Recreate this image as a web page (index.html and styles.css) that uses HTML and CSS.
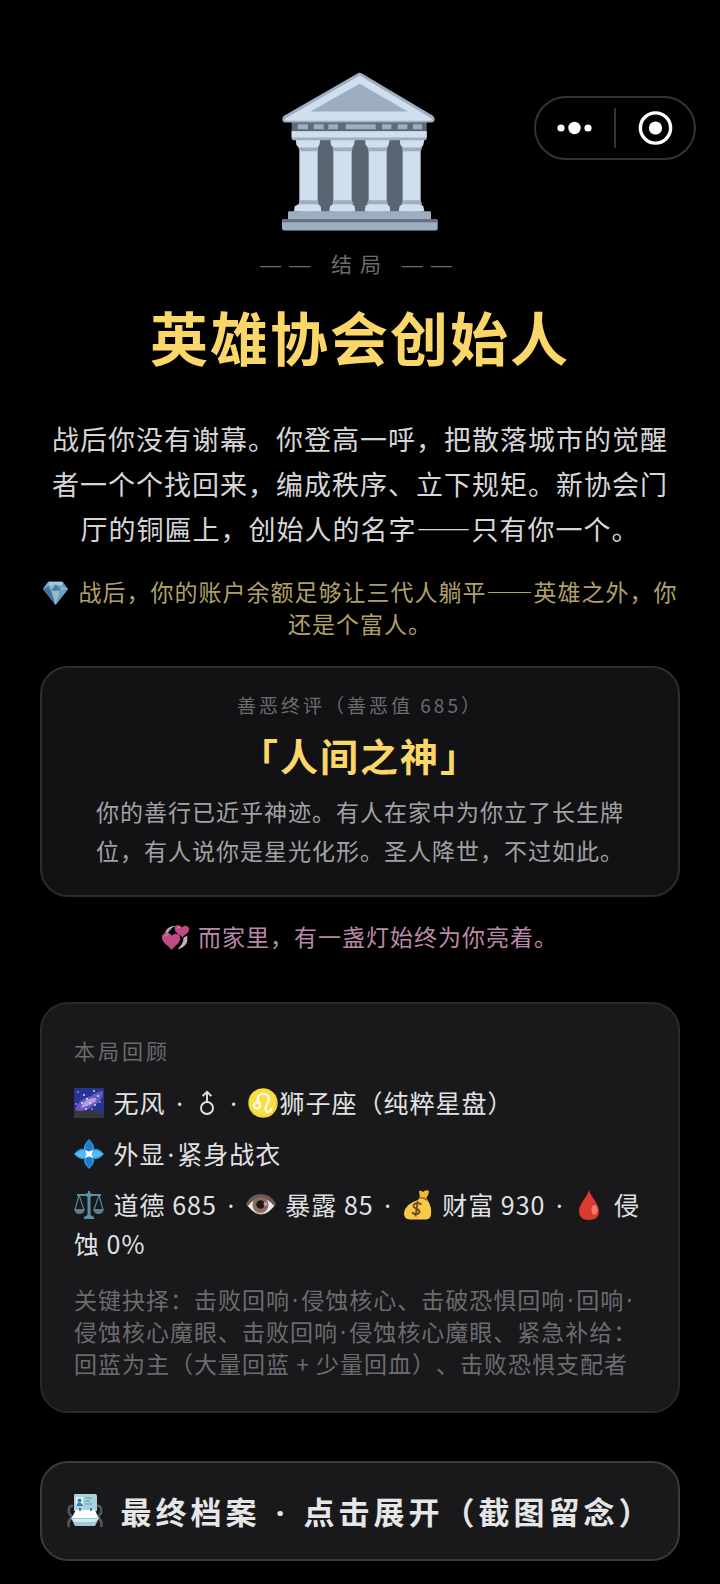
FILE: index.html
```html
<!DOCTYPE html>
<html lang="zh-CN">
<head>
<meta charset="utf-8">
<meta name="viewport" content="width=device-width, initial-scale=1">
<title>英雄协会创始人</title>
<link rel="stylesheet" href="styles.css">
</head>
<body>
<nav class="capsule" aria-label="小程序">
  <button class="capsule-btn" type="button" aria-label="更多">
    <svg width="36" height="36" viewBox="0 0 36 36" fill="#fff"><circle cx="4" cy="18" r="3.6"/><circle cx="17.500" cy="18" r="6.2"/><circle cx="31" cy="18" r="3.6"/></svg>
  </button>
  <span class="capsule-line"></span>
  <button class="capsule-btn" type="button" aria-label="关闭">
    <svg width="36" height="36" viewBox="0 0 36 36"><circle cx="18.500" cy="18" r="15.1" fill="none" stroke="#fff" stroke-width="3.4"/><circle cx="18.500" cy="18" r="6.6" fill="#fff"/></svg>
  </button>
</nav>
<main class="page">
  <svg class="hero" viewBox="66 36 468 476" aria-hidden="true">
    <path d="M120 238H480V460H120Z" fill="#596570"/>
    <path d="M118 238H173V455H118ZM220 238H275V455H220ZM326 238H380V455H326ZM428 238H482V455H428Z" fill="#d0dfed"/>
    <g fill="#d0dfed">
      <path d="M107 238H181L178 254L171 265H118L109 254Z"/><path d="M211 238H285L282 254L275 265H222L213 254Z"/><path d="M315 238H389L386 254L379 265H326L317 254Z"/><path d="M419 238H493L490 254L483 265H430L421 254Z"/>
      <path d="M120 430H172L182 438L184 454H102L104 438Z"/><path d="M222 430H274L284 438L286 454H208L210 438Z"/><path d="M326 430H378L389 438L391 454H314L316 438Z"/><path d="M430 430H480L490 438L493 454H416L419 438Z"/>
    </g>
    <path d="M114 262H175L171 273H122ZM218 262H279L275 273H222ZM322 262H383L379 273H326ZM426 262H486L482 273H430ZM122 420H171L177 432H115ZM222 420H275L281 432H216ZM326 420H379L385 432H320ZM430 420H481L487 432H424Z" fill="#9caec0"/>
    <path d="M95 184H500V218H95Z" fill="#606b76"/>
    <path d="M113 192H144V207H113ZM161 192H191V207H161ZM205 192H234V207H205ZM257 192H347V207H257ZM366 192H394V207H366ZM413 192H442V207H413ZM459 192H486V207H459Z" fill="#9caec0"/>
    <path d="M95 213H500V234Q500 240 494 240H101Q95 240 95 234Z" fill="#9caec0"/><path d="M95 213H500V232H95Z" fill="#d0dfed"/>
    <path d="M291 41Q299 35 307 41L519 167Q525 173 524 180Q522 187 514 187H76Q68 187 67 180Q66 172 72 167Z" fill="#9caec0"/>
    <path d="M299 46L514 174Q520 181 511 182H80Q71 181 77 174Z" fill="#d0dfed"/>
    <path d="M299 71L443 154H151Z" fill="#9caec0"/>
    <path d="M88 453H509Q513 453 513 457V478H84V457Q84 453 88 453Z" fill="#9caec0"/>
    <path d="M70 477H529Q533 477 533 481V505Q533 511 527 511H72Q66 511 66 505V481Q66 477 70 477Z" fill="#9caec0"/>
    <path d="M69 477H530L533 486H66Z" fill="#64717e"/>
  </svg>
  <p class="eyebrow"><span class="dash">——</span> 结局 <span class="dash">——</span></p>
  <h1 class="title">英雄协会创始人</h1>
  <p class="story">战后你没有谢幕。你登高一呼，把散落城市的觉醒者一个个找回来，编成秩序、立下规矩。新协会门厅的铜匾上，创始人的名字——只有你一个。</p>
  <p class="note gold"><svg class="emoji" viewBox="0 0 30 30" aria-hidden="true"><path d="M7 3H23L29 11L15 29L1 11Z" fill="#5e94bd"/><path d="M7 3H23L22 8L15 6L8 8Z" fill="#a9c9d9"/><path d="M7 3L8 8L1 11Z" fill="#76adcf"/><path d="M8 8L10 13L1 11ZM15 6L20 13L10 13Z" fill="#4778aa"/><path d="M8 8L15 6L10 13ZM22 8L20 13L29 11Z" fill="#88b8d3"/><path d="M10 13H20L15 29Z" fill="#9bb8c9"/><path d="M20 13L29 11L15 29Z" fill="#6c9fc2"/><path d="M1 11L10 13L15 29Z" fill="#3d6fa2"/></svg> 战后，你的账户余额足够让三代人躺平——英雄之外，你还是个富人。</p>

  <section class="card verdict">
    <p class="verdict-label">善恶终评（善恶值 685）</p>
    <h2 class="verdict-name">「人间之神」</h2>
    <p class="verdict-text">你的善行已近乎神迹。有人在家中为你立了长生牌位，有人说你是星光化形。圣人降世，不过如此。</p>
  </section>

  <p class="note pink"><svg class="emoji" viewBox="0 0 30 30" aria-hidden="true"><path d="M3 12Q4 2 16 2Q8 5 6 12Z" fill="#b5a3ad"/><path d="M28 13Q30 25 17 28Q24 22 24 15Z" fill="#c6acba"/><path d="M11 29C7 24 0 21 0 15C0 9 8 8 11 13C15 8 22 12 20 18C18 23 13 25 11 29Z" fill="#be4c82"/><path d="M23 15C20 12 14 10 14 5C14 0 20 0 22 4C25 0 31 2 30 7C29 11 24 12 23 15Z" fill="#be4c82"/><path d="M3 14Q4 11 7 12M17 5Q18 3 20 4" fill="none" stroke="#d384a6" stroke-width="1.4"/></svg> 而家里，有一盏灯始终为你亮着。</p>

  <section class="card review">
    <h2 class="review-label">本局回顾</h2>
    <div class="rows">
      <p class="row"><svg class="emoji" viewBox="0 0 30 30" aria-hidden="true"><path d="M0 0H30V30H0Z" fill="#28348f"/><path d="M0 22Q14 20 30 25V30H0Z" fill="#34383d"/><path d="M1 22Q5 10 17 8Q25 3 29 3Q29 13 19 18Q10 25 1 22Z" fill="#6a5ac0"/><path d="M7 20Q9 12 18 10Q25 9 21 14Q15 18 7 20Z" fill="#b69be0"/><g fill="#c3e6ff"><circle cx="4" cy="4" r=".8"/><circle cx="10" cy="7" r="1"/><circle cx="20" cy="3" r="1"/><circle cx="13" cy="11" r="1"/><circle cx="24" cy="8" r="1"/><circle cx="8" cy="15" r="1"/><circle cx="16" cy="15" r="1"/><circle cx="21" cy="17" r="1"/><circle cx="12" cy="21" r="1"/><circle cx="26" cy="14" r=".8"/><circle cx="2" cy="16" r=".8"/><circle cx="18" cy="21" r=".8"/></g></svg> 无风 <span class="dot sep">·</span> <svg class="male" viewBox="0 0 24 26" role="img" aria-label="男" fill="none" stroke="#e2e2e4" stroke-width="1.9"><circle cx="12" cy="18" r="6"/><path d="M12 12V1.8M7.6 6.2L12 1.8L16.4 6.2"/></svg> <span class="dot sep">·</span> <svg class="emoji flush" viewBox="0 0 30 30" role="img" aria-label="狮子"><circle cx="15" cy="15" r="14.7" fill="#f2d735"/><circle cx="14.5" cy="14" r="13" fill="#f8df45"/><g fill="none" stroke="#fffbed" stroke-width="2.2" stroke-linecap="round"><circle cx="9" cy="17.5" r="3.1"/><path d="M11.5 15.5C8 11 10 6 15 6C21 6 22 11 19.5 15C17 19 17 24 20 24Q22.5 24 23.5 21"/></g></svg>狮子座（纯粹星盘）</p>
      <p class="row"><svg class="emoji" viewBox="0 0 30 30" aria-hidden="true"><path d="M15 0Q21 6 20 10Q25 9 30 15Q25 21 20 20Q21 24 15 30Q9 24 10 20Q5 21 0 15Q5 9 10 10Q9 6 15 0Z" fill="#2b9be8"/><path d="M15 1Q20 7 18 11L15 14L12 11Q10 7 15 1ZM15 29Q20 23 18 19L15 16L12 19Q10 23 15 29Z" fill="#2279cf"/><path d="M1 15Q7 10 11 12L14 15L11 18Q7 20 1 15ZM29 15Q23 10 19 12L16 15L19 18Q23 20 29 15Z" fill="#58baf4"/><path d="M11 11L15 12.5L19 11L17.5 15L19 19L15 17.5L11 19L12.5 15Z" fill="#fff"/></svg> 外显<span class="dot">·</span>紧身战衣</p>
      <p class="row"><svg class="emoji" viewBox="0 0 30 30" aria-hidden="true"><g fill="none" stroke="#5f8798" stroke-width="1.1"><path d="M5 5L1 20M5 5L10 20M25 5L20 20M25 5L29 20"/></g><path d="M3 4H11L14 3V1H16V3L19 4H27V6H18L16.5 7V25L20 27V29H10V27L13.5 25V7L12 6H3Z" fill="#5c8fa6"/><path d="M0 19H11Q10 24 5.500 24Q1 24 0 19ZM19 19H30Q29 24 24.500 24Q20 24 19 19Z" fill="#587f90"/></svg> 道德 685 <span class="dot sep">·</span> <svg class="emoji" viewBox="0 0 30 30" aria-hidden="true"><path d="M1 15Q15 -2 29 15Q15 33 1 15Z" fill="#eceaea"/><path d="M0 14Q5 4 15 4Q25 4 30 14L28 16Q23 9 15 8Q7 9 2 16Z" fill="#6b5a53"/><circle cx="14.500" cy="15" r="8" fill="#8d6b5b"/><circle cx="14.500" cy="14.500" r="4.200" fill="#1c1818"/><circle cx="19.500" cy="14" r="2" fill="#c2a496"/><path d="M2 16Q15 32 28 16" fill="none" stroke="#c9bdb8"/></svg> 暴露 85 <span class="dot sep">·</span> <svg class="emoji" viewBox="0 0 30 30" aria-hidden="true"><path d="M16 1Q18 0 20 2Q23 -1 26 1Q26 5 23 8L17 8Z" fill="#f5b92d"/><path d="M15 10L17 7H23L25 11Q29 17 28 25Q27 29.500 22 29.500H8Q1 30 1 23Q2 14 15 10Z" fill="#fcc944"/><path d="M16 8Q20 7 24 10" fill="none" stroke="#9c5f24" stroke-width="1.600"/><path d="M18.500 14.500Q14 11.500 11 14.500C8 19 18 18 16.500 22.500Q13 26 9 22.500M14.800 11L12.500 26.500" fill="none" stroke="#6b4924" stroke-width="1.800"/></svg> 财富 930 <span class="dot sep">·</span> <svg class="emoji" viewBox="0 0 30 30" aria-hidden="true"><path d="M15 0C17 7 25 14 25 21Q25 30 15 30Q5 30 5 21C5 14 13 7 15 0Z" fill="#d93b30"/><ellipse cx="20.500" cy="20" rx="3" ry="5" fill="#f47b67"/></svg> 侵蚀 0%</p>
    </div>
    <p class="choices">关键抉择：击败回响<span class="dot">·</span>侵蚀核心、击破恐惧回响<span class="dot">·</span>回响<span class="dot">·</span>侵蚀核心魔眼、击败回响<span class="dot">·</span>侵蚀核心魔眼、紧急补给：回蓝为主（大量回蓝 + 少量回血）、击败恐惧支配者</p>
  </section>

  <button class="card archive" type="button"><svg class="emoji" viewBox="0 0 36 36" aria-hidden="true"><path d="M6 13Q1 12 2 20L5 24Q0 29 2 34M30 13Q35 12 34 20L31 24Q36 29 34 34" fill="none" stroke="#55565c" stroke-width="2.600"/><path d="M7 2Q7 1 8 1H28Q30 1 30 3V18H7Z" fill="#a9d3db"/><path d="M9 4H16V13H9Z" fill="#e2f4fa"/><circle cx="12.500" cy="7.500" r="2" fill="#3478c3"/><path d="M9.500 13Q10 9 12.500 9.500Q15.500 10 16 13Z" fill="#3478c3"/><path d="M18 5H25M18 8H23M18 11H25" stroke="#6b99a4" stroke-width="1.100"/><path d="M9 17H28L32 26H4Z" fill="#fff"/><path d="M4 25H32L28 33H8Z" fill="#9acbd6"/><path d="M5 26H31L28 29H8Z" fill="#d1edf1"/><path d="M13 15V18M24 15V18" stroke="#4c5055" stroke-width="1.500"/></svg> 最终档案 <span class="dot sep">·</span> 点击展开（截图留念）</button>
</main>
</body>
</html>
```
FILE: styles.css
```css
* { box-sizing: border-box; }

body {
  margin: 0;
  background: #000;
  color: #e2e2e4;
  font-family: "Noto Sans CJK SC", sans-serif;
  text-spacing-trim: space-all;
}

p, h1, h2 { margin: 0; font-weight: 400; }

.page {
  display: flex;
  flex-direction: column;
  align-items: center;
  padding: 72px 40px 22px;
  text-align: center;
}

.capsule {
  position: absolute;
  top: 96px;
  right: 24px;
  display: flex;
  align-items: center;
  width: 162px;
  height: 64px;
  border: 2px solid #333;
  border-radius: 32px;
}

.capsule-btn {
  flex: 1;
  display: flex;
  justify-content: center;
  padding: 0;
  border: 0;
  background: none;
}

.capsule-line {
  width: 2px;
  height: 40px;
  background: #333;
}

.hero { width: 156px; height: 159px; }

.emoji {
  width: 30px;
  height: 30px;
  margin-right: 3px;
  vertical-align: -5px;
}

.flush { margin-right: 1px; }

.male {
  width: 24px;
  height: 26px;
  margin-right: 1px;
  vertical-align: -3px;
}

.dot {
  padding: 0 2px;
  font-family: "Noto Sans", sans-serif;
  line-height: 1;
}

.sep { padding: 0 4px; }

.dash {
  font-family: "Liberation Sans", sans-serif;
  line-height: 1;
}

.eyebrow {
  margin-top: 17px;
  color: #6c6c70;
  font-size: 21px;
  line-height: 30px;
  letter-spacing: 8px;
}

.title {
  margin-top: 24px;
  color: #fbd769;
  font-size: 58px;
  font-weight: 700;
  line-height: 68px;
  letter-spacing: 2px;
}

.story {
  margin-top: 46px;
  color: #d6d6d8;
  font-size: 27px;
  line-height: 45px;
  letter-spacing: 1px;
}

.note {
  font-size: 23px;
  line-height: 32px;
  letter-spacing: 1px;
}

.note .emoji {
  width: 27px;
  height: 27px;
}

.gold { margin-top: 24px; color: #b0a06a; }
.pink { margin-top: 23px; color: #b98aa8; }

.card {
  width: 100%;
  border: 2px solid #29292b;
  border-radius: 28px;
  background: #19191b;
}

.verdict {
  margin-top: 27px;
  padding: 23px 48px 25px;
  border-color: #2d2d2f;
  background: #121214;
}

.verdict-label {
  color: #6c6c70;
  font-size: 19px;
  line-height: 28px;
  letter-spacing: 3px;
}

.verdict-name {
  margin-top: 13px;
  color: #fbd769;
  font-size: 38px;
  font-weight: 700;
  line-height: 46px;
  letter-spacing: 2px;
}

.verdict-text {
  margin-top: 14px;
  color: #a2a2a6;
  font-size: 23px;
  line-height: 39px;
  letter-spacing: 1px;
}

.review {
  margin-top: 50px;
  padding: 32px;
  text-align: left;
}

.review-label {
  color: #6c6c70;
  font-size: 21px;
  line-height: 28px;
  letter-spacing: 3px;
}

.rows {
  display: flex;
  flex-direction: column;
  gap: 12px;
  margin-top: 19px;
}

.row {
  font-size: 25px;
  line-height: 39px;
  letter-spacing: 1px;
}

.choices {
  margin-top: 20px;
  color: #6c6c70;
  font-size: 23px;
  line-height: 32px;
  letter-spacing: 1px;
}

.archive {
  margin-top: 48px;
  padding: 24px 12px;
  border-color: #3a3a3c;
  color: #e6e6e8;
  font-family: inherit;
  font-size: 31px;
  font-weight: 700;
  line-height: 48px;
  letter-spacing: 4px;
  white-space: nowrap;
}

.archive .emoji {
  width: 36px;
  height: 36px;
  margin-right: 7px;
}
```
